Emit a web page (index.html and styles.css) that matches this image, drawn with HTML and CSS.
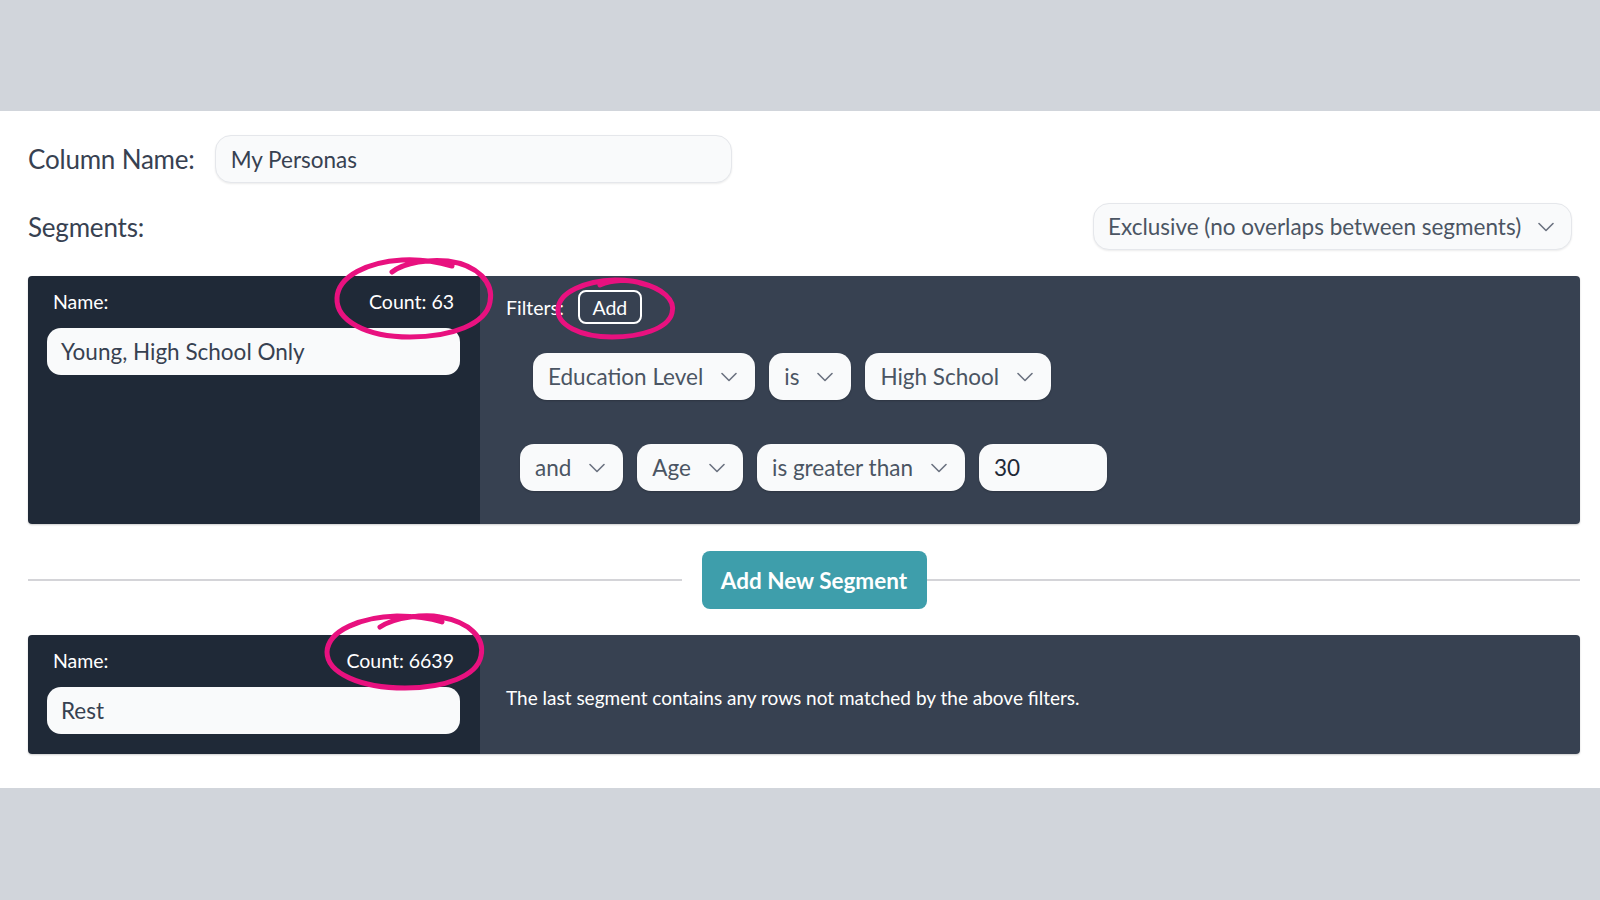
FILE: index.html
```html
<!DOCTYPE html>
<html>
<head>
<meta charset="utf-8">
<link rel="stylesheet" href="styles.css">
</head>
<body>
<div class="top-band"></div>
<main class="page">
  <div class="row name-row">
    <label class="field-label">Column Name:</label>
    <div class="text-input col-input">My Personas</div>
  </div>
  <div class="row seg-row">
    <span class="field-label">Segments:</span>
    <div class="dropdown mode">
      <span>Exclusive (no overlaps between segments)</span>
      <svg class="chev" viewBox="0 0 16 10"><path d="M1 1.5 L8 8.5 L15 1.5"/></svg>
    </div>
  </div>

  <section class="card card-1">
    <div class="card-left">
      <div class="left-head"><span>Name:</span><span>Count: 63</span></div>
      <div class="name-input">Young, High School Only</div>
    </div>
    <div class="card-right">
      <div class="filters-head"><span>Filters:</span><button class="add-btn">Add</button></div>
      <div class="filter-row first">
        <div class="sel"><span>Education Level</span><svg class="chev" viewBox="0 0 16 10"><path d="M1 1.5 L8 8.5 L15 1.5"/></svg></div>
        <div class="sel"><span>is</span><svg class="chev" viewBox="0 0 16 10"><path d="M1 1.5 L8 8.5 L15 1.5"/></svg></div>
        <div class="sel"><span>High School</span><svg class="chev" viewBox="0 0 16 10"><path d="M1 1.5 L8 8.5 L15 1.5"/></svg></div>
      </div>
      <div class="filter-row">
        <div class="sel"><span>and</span><svg class="chev" viewBox="0 0 16 10"><path d="M1 1.5 L8 8.5 L15 1.5"/></svg></div>
        <div class="sel"><span>Age</span><svg class="chev" viewBox="0 0 16 10"><path d="M1 1.5 L8 8.5 L15 1.5"/></svg></div>
        <div class="sel"><span>is greater than</span><svg class="chev" viewBox="0 0 16 10"><path d="M1 1.5 L8 8.5 L15 1.5"/></svg></div>
        <div class="val">30</div>
      </div>
    </div>
  </section>

  <div class="divider">
    <span class="line left"></span>
    <button class="new-seg">Add New Segment</button>
    <span class="line"></span>
  </div>

  <section class="card card-2">
    <div class="card-left">
      <div class="left-head"><span>Name:</span><span>Count: 6639</span></div>
      <div class="name-input">Rest</div>
    </div>
    <div class="card-right rest-note">
      <p>The last segment contains any rows not matched by the above filters.</p>
    </div>
  </section>
</main>
<div class="bottom-band"></div>

<svg class="annot" viewBox="0 0 1600 900" width="1600" height="900">
  <path d="M392 272 C 405 262, 430 259, 448 261 C 478 265, 494 283, 490 302 C 486 324, 452 337, 410 337 C 365 337, 336 320, 337 298 C 338 276, 368 262, 402 260 C 420 259, 438 262, 452 266"/>
  <path d="M600 285 C 612 280, 630 279, 640 283 C 662 288, 676 300, 672 313 C 668 329, 640 337, 612 337 C 580 337, 557 325, 558 309 C 559 292, 585 281, 615 280 C 628 280, 640 282, 648 285"/>
  <path d="M380 627 C 395 617, 425 614, 440 617 C 470 622, 485 638, 481 656 C 477 676, 445 688, 405 688 C 360 688, 327 673, 327 652 C 328 630, 362 617, 397 616 C 414 616, 430 618, 442 622"/>
</svg>
</body>
</html>
```

FILE: styles.css
```css
* { box-sizing: border-box; }
html, body { margin: 0; padding: 0; }
body {
  width: 1600px;
  height: 900px;
  background: #d1d5db;
  font-family: Lato, "Open Sans", "Liberation Sans", sans-serif;
  color: #374151;
  position: relative;
  overflow: hidden;
}
.top-band { height: 111px; }
.page {
  background: #ffffff;
  height: 677px;
  padding: 24px 20px 0 28px;
}
.row { display: flex; align-items: center; }
.field-label {
  font-size: 26px;
  color: #374151;
  letter-spacing: -0.2px;
}
.name-row { gap: 20px; }
.text-input {
  height: 48px;
  display: flex;
  align-items: center;
  padding: 0 15px;
  background: #f9fafb;
  border: 1px solid #e5e7eb;
  border-radius: 16px;
  box-shadow: 0 1px 2px rgba(0,0,0,0.08);
  font-size: 22.5px;
  color: #374151;
}
.col-input { width: 517px; }
.seg-row {
  margin-top: 20px;
  justify-content: space-between;
  padding-right: 8px;
}
.dropdown {
  height: 47px;
  width: 479px;
  display: flex;
  align-items: center;
  justify-content: space-between;
  padding: 0 17px 0 14px;
  background: #f9fafb;
  border: 1px solid #e5e7eb;
  border-radius: 16px;
  box-shadow: 0 1px 2px rgba(0,0,0,0.08);
  font-size: 22.5px;
  color: #4b5563;
}
.chev {
  width: 16px;
  height: 10px;
  flex: none;
}
.chev path {
  fill: none;
  stroke: #6b7280;
  stroke-width: 1.6;
  stroke-linecap: round;
  stroke-linejoin: round;
}
.card {
  display: flex;
  border-radius: 4px;
  overflow: hidden;
  box-shadow: 0 1px 2px rgba(0,0,0,0.2);
}
.card-1 { margin-top: 26px; height: 248px; }
.card-2 { height: 119px; }
.card-left {
  width: 452px;
  flex: none;
  background: #1f2937;
  padding: 14px 20px 0 19px;
  color: #ffffff;
}
.left-head {
  display: flex;
  justify-content: space-between;
  padding: 0 6px 0 6px;
  font-size: 19.5px;
  line-height: 24px;
}
.name-input {
  margin-top: 14px;
  height: 47px;
  background: #f9fafb;
  border-radius: 14px;
  display: flex;
  align-items: center;
  padding: 0 14px;
  font-size: 22.5px;
  color: #374151;
}
.card-right {
  flex: 1;
  background: #374151;
  color: #ffffff;
  padding: 14px 26px 0 26px;
}
.filters-head {
  display: flex;
  align-items: center;
  gap: 14px;
  font-size: 19.5px;
}
.add-btn {
  font-family: inherit;
  font-size: 19.5px;
  color: #ffffff;
  background: transparent;
  border: 2px solid #ffffff;
  border-radius: 8px;
  height: 34px;
  width: 64px;
  padding: 0;
}
.filter-row {
  display: flex;
  gap: 14px;
  margin-top: 44px;
  padding-left: 14px;
}
.filter-row.first { margin-top: 29px; padding-left: 27px; }
.sel, .val {
  height: 47px;
  display: flex;
  align-items: center;
  gap: 18px;
  padding: 0 18px 0 15px;
  background: #f9fafb;
  border-radius: 14px;
  box-shadow: 0 1px 2px rgba(0,0,0,0.2);
  font-size: 22.5px;
  color: #4b5563;
}
.val { width: 128px; color: #1f2937; }
.divider {
  display: flex;
  align-items: center;
  margin: 27px 0 26px;
}
.line {
  flex: 1;
  height: 2px;
  background: #d4d4d8;
}
.line.left { margin-right: 20px; }
.new-seg {
  width: 225px;
  height: 58px;
  border: none;
  border-radius: 8px;
  background: #3e9eab;
  color: #ffffff;
  font-family: inherit;
  font-weight: 700;
  font-size: 22.5px;
  padding: 0;
}
.rest-note {
  display: flex;
  align-items: center;
  padding-top: 0;
}
.rest-note p {
  margin: 6px 0 0;
  font-size: 19px;
}
.annot {
  position: absolute;
  left: 0;
  top: 0;
  pointer-events: none;
}
.annot path {
  fill: none;
  stroke: #e8117f;
  stroke-width: 5;
  stroke-linecap: round;
}
```
